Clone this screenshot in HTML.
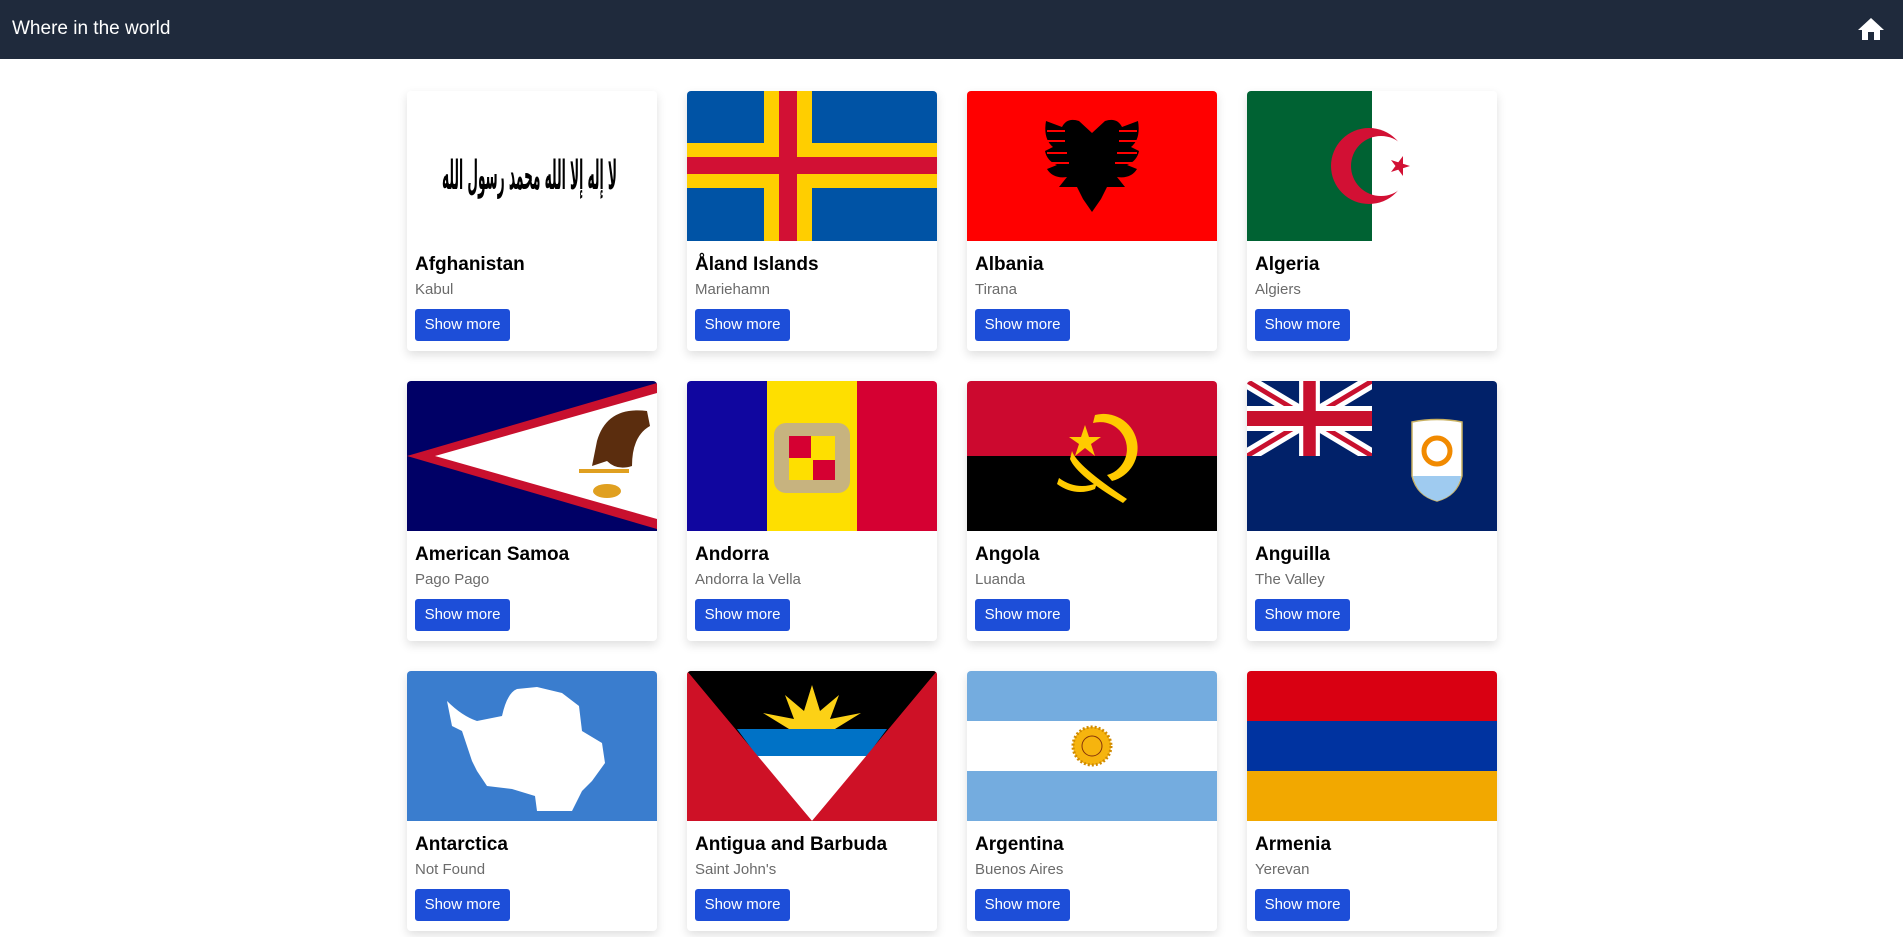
<!DOCTYPE html>
<html><head><meta charset="utf-8"><style>
*{box-sizing:border-box;margin:0;padding:0}
body{width:1903px;height:937px;overflow:hidden;background:#fff;font-family:"Liberation Sans",sans-serif}
.hdr{height:59px;background:#1f2a3c;position:relative}
.hdr h1{position:absolute;left:12px;top:18px;color:#fff;font-size:19px;font-weight:normal}
.hdr svg{position:absolute;right:18px;top:17px}
.grid{position:absolute;left:407px;top:91px;display:grid;grid-template-columns:repeat(4,250px);column-gap:30px;row-gap:30px}
.card{width:250px;height:260px;background:#fff;border-radius:4px;box-shadow:0 4px 10px rgba(0,0,0,.13);overflow:hidden}
.card svg.f{display:block;width:250px;height:150px}
.b{padding:12px 8px 8px}
.b h2{font-size:19px;line-height:24px;font-weight:bold;color:#000}
.b p{font-size:15px;line-height:22px;color:#6b6b6b;margin-top:2px}
.btn{display:inline-block;margin-top:8px;background:#1d4ed8;color:#fff;font-size:15px;height:32px;line-height:32px;padding:0 8px;border-radius:3px;width:95px;text-align:center}
</style></head><body>
<div class="hdr"><h1>Where in the world</h1>
<svg width="28" height="24" viewBox="0 0 28 24"><path d="M14 1 L27 13 H23 V23 H17 V15 H11 V23 H5 V13 H1 Z" fill="#fff"/></svg></div>
<div class="grid">

<div class="card"><svg class="f" viewBox="0 0 250 150"><rect width="250" height="150" fill="#fff"/><text x="35" y="98" textLength="175" lengthAdjust="spacingAndGlyphs" font-family="DejaVu Sans,sans-serif" font-weight="bold" font-size="40" fill="#000">لا إله إلا الله محمد رسول الله</text></svg>
<div class="b"><h2>Afghanistan</h2><p>Kabul</p><span class="btn">Show more</span></div></div>

<div class="card"><svg class="f" viewBox="0 0 250 150"><rect width="250" height="150" fill="#0053a5"/><rect x="77" width="48" height="150" fill="#ffce00"/><rect y="52" width="250" height="45" fill="#ffce00"/><rect x="92" width="18" height="150" fill="#d21034"/><rect y="66" width="250" height="17" fill="#d21034"/></svg>
<div class="b"><h2>Åland Islands</h2><p>Mariehamn</p><span class="btn">Show more</span></div></div>

<div class="card"><svg class="f" viewBox="0 0 250 150"><rect width="250" height="150" fill="#f00"/><path d="M125 42 L112 30 Q100 26 95 36 L79 30 Q76 48 86 56 L78 60 Q80 70 90 74 L80 78 Q86 88 100 86 L92 96 L110 96 L116 108 L125 121 L134 108 L140 96 L158 96 L150 86 Q164 88 170 78 L160 74 Q170 70 172 60 L164 56 Q174 48 171 30 L155 36 Q150 26 138 30 Z" fill="#000"/><path d="M80 40 H98 M80 50 H98 M80 62 H100 M82 72 H102 M152 40 H170 M152 50 H170 M150 62 H170 M148 72 H168" stroke="#f00" stroke-width="2"/></svg>
<div class="b"><h2>Albania</h2><p>Tirana</p><span class="btn">Show more</span></div></div>

<div class="card"><svg class="f" viewBox="0 0 250 150"><defs><mask id="cr"><rect width="250" height="150" fill="#fff"/><circle cx="134" cy="75" r="30" fill="#000"/></mask></defs><rect width="250" height="150" fill="#fff"/><rect width="125" height="150" fill="#006233"/><circle cx="122" cy="75" r="38" fill="#d21034" mask="url(#cr)"/><polygon points="163,75 144,81 156,65 156,85 144,69" fill="#d21034"/></svg>
<div class="b"><h2>Algeria</h2><p>Algiers</p><span class="btn">Show more</span></div></div>

<div class="card"><svg class="f" viewBox="0 0 250 150"><rect width="250" height="150" fill="#006"/><polygon points="250,2 0,75 250,148" fill="#c8102e"/><polygon points="250,12 28,75 250,138" fill="#fff"/><path d="M190 60 Q200 25 240 30 L243 45 Q225 55 225 85 Q210 90 200 80 L185 85 Z" fill="#5b2d0e"/><rect x="172" y="88" width="50" height="4" fill="#e0a020"/><ellipse cx="200" cy="110" rx="14" ry="7" fill="#e0a020"/></svg>
<div class="b"><h2>American Samoa</h2><p>Pago Pago</p><span class="btn">Show more</span></div></div>

<div class="card"><svg class="f" viewBox="0 0 250 150"><rect width="83" height="150" fill="#10069f"/><rect x="80" width="90" height="150" fill="#fedf00"/><rect x="170" width="80" height="150" fill="#d50032"/><rect x="87" y="42" width="76" height="70" rx="12" fill="#c7b37f"/><rect x="102" y="55" width="46" height="44" fill="#fedf00"/><rect x="102" y="55" width="22" height="22" fill="#d50032"/><rect x="126" y="79" width="22" height="20" fill="#d50032"/></svg>
<div class="b"><h2>Andorra</h2><p>Andorra la Vella</p><span class="btn">Show more</span></div></div>

<div class="card"><svg class="f" viewBox="0 0 250 150"><rect width="250" height="75" fill="#cc092f"/><rect y="75" width="250" height="75" fill="#000"/><path d="M128 34 A34 34 0 0 1 145 100 L140 94 A26 26 0 0 0 126 42 Z" fill="#ffcb00"/><path d="M92 97 Q110 110 130 102 L128 108 Q108 116 90 103 Z" fill="#ffcb00"/><path d="M105 70 Q110 85 160 118 L156 122 Q110 95 103 78 Z" fill="#ffcb00"/><polygon points="118,44 122,56 134,56 124,63 128,75 118,67 108,75 112,63 102,56 114,56" fill="#ffcb00"/></svg>
<div class="b"><h2>Angola</h2><p>Luanda</p><span class="btn">Show more</span></div></div>

<div class="card"><svg class="f" viewBox="0 0 250 150"><rect width="250" height="150" fill="#012169"/><svg x="0" y="0" width="125" height="75" viewBox="0 0 60 30" preserveAspectRatio="none"><path d="M0 0L60 30M60 0L0 30" stroke="#fff" stroke-width="6"/><path d="M0 0L60 30M60 0L0 30" stroke="#c8102e" stroke-width="2"/><path d="M30 0V30M0 15H60" stroke="#fff" stroke-width="10"/><path d="M30 0V30M0 15H60" stroke="#c8102e" stroke-width="6"/></svg><path d="M165 41 Q190 36 215 41 V95 Q210 115 190 120 Q170 115 165 95 Z" fill="#fff" stroke="#c8b060" stroke-width="1.5"/><path d="M166 95 H214 Q210 115 190 120 Q170 115 166 95Z" fill="#9fcbf0"/><circle cx="190" cy="70" r="13" fill="none" stroke="#f18a00" stroke-width="5"/></svg>
<div class="b"><h2>Anguilla</h2><p>The Valley</p><span class="btn">Show more</span></div></div>

<div class="card"><svg class="f" viewBox="0 0 250 150"><rect width="250" height="150" fill="#3a7dce"/><path d="M40 30 Q55 45 70 50 L95 45 Q100 22 110 18 L130 16 L155 22 L172 35 L175 60 L195 72 L198 92 L185 110 L175 120 L165 140 L130 140 L128 125 L105 118 L80 115 L70 100 L65 90 L60 75 L55 60 L45 55 Z" fill="#fff"/></svg>
<div class="b"><h2>Antarctica</h2><p>Not Found</p><span class="btn">Show more</span></div></div>

<div class="card"><svg class="f" viewBox="0 0 250 150"><rect width="250" height="150" fill="#ce1126"/><polygon points="0,0 250,0 125,150" fill="#000"/><polygon points="125,14 133,40 152,24 143,48 174,42 148,58 102,58 76,42 107,48 98,24 117,40" fill="#fcd116"/><polygon points="50,58 200,58 180,85 70,85" fill="#0072c6"/><polygon points="70,85 180,85 125,150" fill="#fff"/><polygon points="0,0 125,150 0,150" fill="#ce1126"/><polygon points="250,0 125,150 250,150" fill="#ce1126"/></svg>
<div class="b"><h2>Antigua and Barbuda</h2><p>Saint John's</p><span class="btn">Show more</span></div></div>

<div class="card"><svg class="f" viewBox="0 0 250 150"><rect width="250" height="150" fill="#74acdf"/><rect y="50" width="250" height="50" fill="#fff"/><circle cx="125" cy="75" r="19" fill="#f6b40e" stroke="#d08a00" stroke-dasharray="2 2" stroke-width="3"/><circle cx="125" cy="75" r="10" fill="#f6b40e" stroke="#85340a" stroke-width="1"/></svg>
<div class="b"><h2>Argentina</h2><p>Buenos Aires</p><span class="btn">Show more</span></div></div>

<div class="card"><svg class="f" viewBox="0 0 250 150"><rect width="250" height="50" fill="#d90012"/><rect y="50" width="250" height="50" fill="#0033a0"/><rect y="100" width="250" height="50" fill="#f2a800"/></svg>
<div class="b"><h2>Armenia</h2><p>Yerevan</p><span class="btn">Show more</span></div></div>

</div></body></html>
